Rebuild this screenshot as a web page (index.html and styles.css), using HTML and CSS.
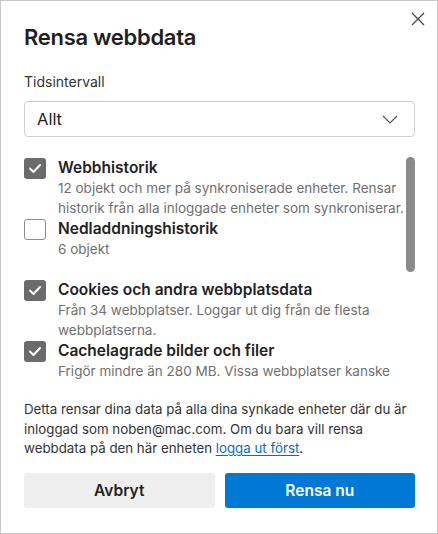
FILE: index.html
```html
<!DOCTYPE html>
<html lang="sv">
<head>
<meta charset="utf-8">
<title>Rensa webbdata</title>
<link rel="stylesheet" href="styles.css">
</head>
<body>
<div class="dialog">
  <button class="close" aria-label="Stäng">
    <svg width="14" height="14" viewBox="0 0 14 14"><path d="M1 1 L13 13 M13 1 L1 13" stroke="#444" stroke-width="1.2" fill="none"/></svg>
  </button>
  <h1 class="title">Rensa webbdata</h1>
  <div class="label">Tidsintervall</div>
  <div class="select">
    <span>Allt</span>
    <svg width="16" height="9" viewBox="0 0 16 9"><path d="M1 1 L8 8 L15 1" stroke="#555" stroke-width="1.2" fill="none"/></svg>
  </div>
  <div class="scroll">
    <div class="list">
      <div class="item">
        <span class="box checked"><svg width="22" height="21" viewBox="0 0 22 21"><path d="M6 10.5 L9.5 14 L16 7" stroke="#fff" stroke-width="2" fill="none" stroke-linecap="round" stroke-linejoin="round"/></svg></span>
        <div class="text">
          <div class="name">Webbhistorik</div>
          <div class="desc">12 objekt och mer på synkroniserade enheter. Rensar<br>historik från alla inloggade enheter som synkroniserar.</div>
        </div>
      </div>
      <div class="item">
        <span class="box"></span>
        <div class="text">
          <div class="name">Nedladdningshistorik</div>
          <div class="desc">6 objekt</div>
        </div>
      </div>
      <div class="item">
        <span class="box checked"><svg width="22" height="21" viewBox="0 0 22 21"><path d="M6 10.5 L9.5 14 L16 7" stroke="#fff" stroke-width="2" fill="none" stroke-linecap="round" stroke-linejoin="round"/></svg></span>
        <div class="text">
          <div class="name">Cookies och andra webbplatsdata</div>
          <div class="desc">Från 34 webbplatser. Loggar ut dig från de flesta<br>webbplatserna.</div>
        </div>
      </div>
      <div class="item last">
        <span class="box checked"><svg width="22" height="21" viewBox="0 0 22 21"><path d="M6 10.5 L9.5 14 L16 7" stroke="#fff" stroke-width="2" fill="none" stroke-linecap="round" stroke-linejoin="round"/></svg></span>
        <div class="text">
          <div class="name">Cachelagrade bilder och filer</div>
          <div class="desc">Frigör mindre än 280 MB. Vissa webbplatser kanske</div>
        </div>
      </div>
    </div>
    <div class="scrollbar"></div>
  </div>
  <p class="note">Detta rensar dina data på alla dina synkade enheter där du är<br>inloggad som noben@mac.com. Om du bara vill rensa<br>webbdata på den här enheten <a href="#">logga ut först</a>.</p>
  <div class="buttons">
    <button class="btn secondary">Avbryt</button>
    <button class="btn primary">Rensa nu</button>
  </div>
</div>
</body>
</html>
```

FILE: styles.css
```css
* { box-sizing: border-box; }
html, body { margin: 0; padding: 0; background: #fff; }
body { font-family: Inter, "Noto Sans", "Liberation Sans", sans-serif; color: #222; }

.dialog {
  position: relative;
  width: 438px;
  height: 534px;
  border: 1px solid #c8c8c8;
  padding: 21px 22px 0 23px;
  display: flex;
  flex-direction: column;
}

.close {
  position: absolute;
  top: 11px;
  right: 12px;
  border: 0;
  background: none;
  padding: 0;
  width: 14px;
  height: 14px;
  display: flex;
}

.title {
  margin: 0;
  font-size: 22px;
  line-height: 30px;
  font-weight: 600;
  color: #1f1f1f;
  letter-spacing: -0.3px;
}

.label {
  margin-top: 20px;
  font-size: 14px;
  line-height: 20px;
  color: #333;
}

.select {
  margin-top: 9px;
  height: 36px;
  border: 1px solid #cfcfcf;
  border-radius: 4px;
  padding: 0 16px 0 12px;
  display: flex;
  align-items: center;
  justify-content: space-between;
  font-size: 16.5px;
  color: #222;
}

.scroll {
  position: relative;
  margin-top: 10px;
  height: 236px;
  overflow: hidden;
  padding-top: 11px;
}

.list {
  display: flex;
  flex-direction: column;
  gap: 1px;
}

.item {
  display: grid;
  grid-template-columns: 22px 1fr;
  column-gap: 12px;
  min-height: 60px;
  align-items: start;
}
.item.last { min-height: 0; }

.box {
  width: 22px;
  height: 21px;
  border-radius: 3px;
  border: 1px solid #8c8c8c;
  background: #fff;
  display: flex;
}
.box.checked {
  border: 0;
  background: #6b6b6b;
}

.name {
  font-size: 15.5px;
  line-height: 22px;
  font-weight: 600;
  color: #222;
  margin-top: -1px;
}

.desc {
  font-size: 13.5px;
  line-height: 19.5px;
  color: #707070;
  white-space: nowrap;
}

.scrollbar {
  position: absolute;
  right: 0;
  top: 10px;
  width: 9px;
  height: 115px;
  border-radius: 5px;
  background: #8a8a8a;
}

.note {
  margin: 17px 0 0;
  font-size: 13.3px;
  line-height: 19.5px;
  color: #333;
  white-space: nowrap;
}
.note a {
  color: #0a6cc9;
  text-decoration: underline;
  text-underline-offset: 2px;
}

.buttons {
  margin-top: 14px;
  display: grid;
  grid-template-columns: 1fr 1fr;
  gap: 10px;
}

.btn {
  height: 35px;
  border-radius: 3px;
  font-family: inherit;
  font-size: 15.5px;
  font-weight: 600;
  border: 0;
}
.btn.secondary {
  background: #efefef;
  color: #222;
}
.btn.primary {
  background: #0078d4;
  color: #fff;
}
```
